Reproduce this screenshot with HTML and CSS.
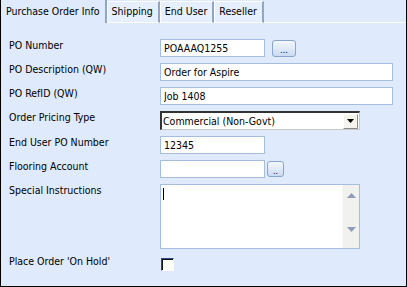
FILE: index.html
```html
<!DOCTYPE html>
<html lang="en">
<head>
    <meta charset="UTF-8">
    <title>Purchase Order Info</title>
    <link rel="stylesheet" href="styles.css">
</head>
<body>
    <div class="po-window">
        <div class="tab-strip">
            <div class="tab active">Purchase Order Info</div>
            <div class="tab">Shipping</div>
            <div class="tab">End User</div>
            <div class="tab">Reseller</div>
            <div class="tab-fill"></div>
        </div>
        <div class="tab-body">
            <div class="form-grid">
                <label class="lbl">PO Number</label>
                <div class="field">
                    <input type="text" class="txt txt-short" value="POAAAQ1255">
                    <button class="dots-btn">...</button>
                </div>

                <label class="lbl">PO Description (QW)</label>
                <div class="field">
                    <input type="text" class="txt txt-long" value="Order for Aspire">
                </div>

                <label class="lbl">PO RefID (QW)</label>
                <div class="field">
                    <input type="text" class="txt txt-long" value="Job 1408">
                </div>

                <label class="lbl">Order Pricing Type</label>
                <div class="field">
                    <div class="combo">
                        <span class="combo-text">Commercial (Non-Govt)</span>
                        <span class="combo-btn">
                            <svg width="7" height="4" viewBox="0 0 7 4"><path d="M0 0h7L3.5 4z" fill="#000"/></svg>
                        </span>
                    </div>
                </div>

                <label class="lbl">End User PO Number</label>
                <div class="field">
                    <input type="text" class="txt txt-short" value="12345">
                </div>

                <label class="lbl">Flooring Account</label>
                <div class="field">
                    <input type="text" class="txt txt-short" value="">
                    <button class="dots-btn small">..</button>
                </div>

                <label class="lbl">Special Instructions</label>
                <div class="field">
                    <div class="memo">
                        <div class="memo-text"><span class="caret"></span></div>
                        <div class="memo-scroll">
                            <svg width="9" height="5" viewBox="0 0 9 5"><path d="M4.5 0L9 5H0z" fill="#8e9cb8"/></svg>
                            <svg width="9" height="5" viewBox="0 0 9 5"><path d="M0 0h9L4.5 5z" fill="#8e9cb8"/></svg>
                        </div>
                    </div>
                </div>

                <label class="lbl">Place Order 'On Hold'</label>
                <div class="field">
                    <span class="check"></span>
                </div>
            </div>
        </div>
    </div>
</body>
</html>
```

FILE: styles.css
```css
* {
    margin: 0;
    padding: 0;
    box-sizing: border-box;
}
body {
    background: #dfeafc;
    font-family: "DejaVu Sans Condensed", "DejaVu Sans", sans-serif;
    font-stretch: condensed;
    font-size: 10.5px;
    color: #000;
}
.po-window {
    width: 407px;
    height: 287px;
    border: 1px solid #000;
    border-top: none;
    background: #dfeafc;
}
.tab-strip {
    display: flex;
    height: 23px;
    padding-top: 1px;
}
.tab {
    height: 22px;
    line-height: 19px;
    padding: 0 5px 0 4px;
    background: #e6effd;
    border-top: 1px solid #fff;
    border-left: 1px solid #fff;
    border-right: 2px solid #8fa5c9;
    border-bottom: 1px solid #fff;
    white-space: nowrap;
}
.tab.active {
    margin-top: -1px;
    height: 23px;
    line-height: 22px;
    padding: 0 5px;
    background: #dfeafc;
    border-top: none;
    border-left: none;
    border-bottom: none;
}
.tab-fill {
    flex: 1;
    border-bottom: 1px solid #fff;
}
.form-grid {
    display: grid;
    grid-template-columns: 151px auto;
    row-gap: 6px;
    padding: 16px 0 0 8px;
}
.lbl {
    line-height: 13px;
    white-space: nowrap;
}
.field {
    display: flex;
    align-items: center;
    min-height: 18px;
}
.txt {
    height: 18px;
    border: 1px solid #a7bddd;
    background: #fff;
    padding: 0 3px;
    font: inherit;
    font-stretch: condensed;
    color: #000;
    outline: none;
}
.txt-short {
    width: 105px;
}
.txt-long {
    width: 233px;
}
.dots-btn {
    margin-left: 7px;
    width: 24px;
    height: 17px;
    border: 1px solid #8aa4cc;
    border-radius: 3px;
    background: linear-gradient(#f3f7fe, #dbe7f8 60%, #c9daf2);
    font: inherit;
    font-size: 9px;
    line-height: 14px;
    padding-top: 2px;
    color: #000;
}
.dots-btn.small {
    margin-left: 2px;
    width: 17px;
    height: 16px;
}
.combo {
    display: flex;
    align-items: center;
    width: 200px;
    height: 19px;
    background: #fff;
    border-top: 2px solid #333;
    border-left: 2px solid #333;
    border-right: 1px solid #c8c8c8;
    border-bottom: 1px solid #c8c8c8;
}
.combo-text {
    flex: 1;
    padding-left: 1px;
    white-space: nowrap;
}
.combo-btn {
    display: flex;
    align-items: center;
    justify-content: center;
    width: 15px;
    height: 15px;
    margin-right: 1px;
    background: #f4f3ee;
    border-top: 1px solid #fff;
    border-left: 1px solid #fff;
    border-right: 1px solid #8a8a8a;
    border-bottom: 1px solid #8a8a8a;
}
.memo {
    display: flex;
    width: 200px;
    height: 65px;
    border: 1px solid #a7bddd;
    background: #fff;
}
.memo-text {
    flex: 1;
    padding: 3px 0 0 2px;
}
.caret {
    display: block;
    width: 1px;
    height: 12px;
    background: #000;
}
.memo-scroll {
    display: flex;
    flex-direction: column;
    justify-content: space-between;
    align-items: center;
    width: 17px;
    padding: 8px 0 16px;
    background: #f1f1ef;
    border-left: 1px solid #f7f7f5;
}
.check {
    display: block;
    width: 13px;
    height: 13px;
    margin-left: 1px;
    background: #fdfdf9;
    border-top: 1px solid #2a4a80;
    border-left: 1px solid #2a4a80;
    border-right: 1px solid #fff;
    border-bottom: 1px solid #fff;
    box-shadow: inset 1px 1px 0 #111;
}
```
